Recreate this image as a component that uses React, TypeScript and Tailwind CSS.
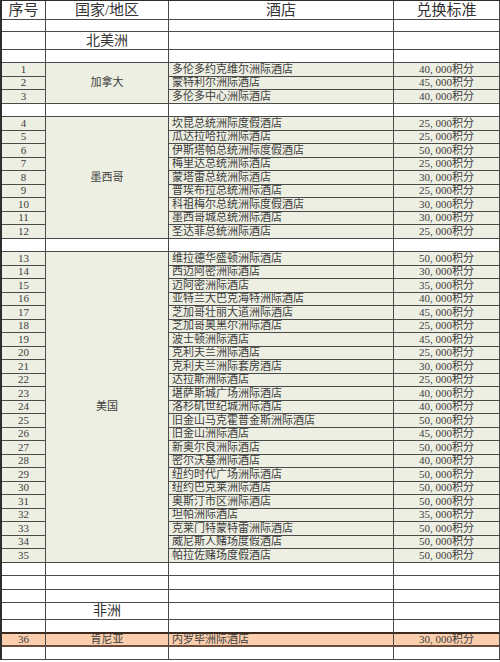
import React from "react";

interface HotelRow {
  n: number;
  hotel: string;
  pts: string;
}

interface Group {
  country: string;
  span: string;
  rows: HotelRow[];
}

const canada: Group = {
  country: "加拿大",
  span: "row-span-3",
  rows: [
    { n: 1, hotel: "多伦多约克维尔洲际酒店", pts: "40, 000积分" },
    { n: 2, hotel: "蒙特利尔洲际酒店", pts: "45, 000积分" },
    { n: 3, hotel: "多伦多中心洲际酒店", pts: "40, 000积分" },
  ],
};

const mexico: Group = {
  country: "墨西哥",
  span: "row-span-9",
  rows: [
    { n: 4, hotel: "坎昆总统洲际度假酒店", pts: "25, 000积分" },
    { n: 5, hotel: "瓜达拉哈拉洲际酒店", pts: "25, 000积分" },
    { n: 6, hotel: "伊斯塔帕总统洲际度假酒店", pts: "50, 000积分" },
    { n: 7, hotel: "梅里达总统洲际酒店", pts: "25, 000积分" },
    { n: 8, hotel: "蒙塔雷总统洲际酒店", pts: "30, 000积分" },
    { n: 9, hotel: "普埃布拉总统洲际酒店", pts: "25, 000积分" },
    { n: 10, hotel: "科祖梅尔总统洲际度假酒店", pts: "30, 000积分" },
    { n: 11, hotel: "墨西哥城总统洲际酒店", pts: "30, 000积分" },
    { n: 12, hotel: "圣达菲总统洲际酒店", pts: "25, 000积分" },
  ],
};

const usa: Group = {
  country: "美国",
  span: "row-span-23",
  rows: [
    { n: 13, hotel: "维拉德华盛顿洲际酒店", pts: "50, 000积分" },
    { n: 14, hotel: "西迈阿密洲际酒店", pts: "30, 000积分" },
    { n: 15, hotel: "迈阿密洲际酒店", pts: "35, 000积分" },
    { n: 16, hotel: "亚特兰大巴克海特洲际酒店", pts: "40, 000积分" },
    { n: 17, hotel: "芝加哥壮丽大道洲际酒店", pts: "45, 000积分" },
    { n: 18, hotel: "芝加哥奥黑尔洲际酒店", pts: "25, 000积分" },
    { n: 19, hotel: "波士顿洲际酒店", pts: "45, 000积分" },
    { n: 20, hotel: "克利夫兰洲际酒店", pts: "25, 000积分" },
    { n: 21, hotel: "克利夫兰洲际套房酒店", pts: "30, 000积分" },
    { n: 22, hotel: "达拉斯洲际酒店", pts: "25, 000积分" },
    { n: 23, hotel: "堪萨斯城广场洲际酒店", pts: "40, 000积分" },
    { n: 24, hotel: "洛杉矶世纪城洲际酒店", pts: "40, 000积分" },
    { n: 25, hotel: "旧金山马克霍普金斯洲际酒店", pts: "50, 000积分" },
    { n: 26, hotel: "旧金山洲际酒店", pts: "45, 000积分" },
    { n: 27, hotel: "新奥尔良洲际酒店", pts: "50, 000积分" },
    { n: 28, hotel: "密尔沃基洲际酒店", pts: "40, 000积分" },
    { n: 29, hotel: "纽约时代广场洲际酒店", pts: "50, 000积分" },
    { n: 30, hotel: "纽约巴克莱洲际酒店", pts: "50, 000积分" },
    { n: 31, hotel: "奥斯汀市区洲际酒店", pts: "50, 000积分" },
    { n: 32, hotel: "坦帕洲际酒店", pts: "35, 000积分" },
    { n: 33, hotel: "克莱门特蒙特雷洲际酒店", pts: "50, 000积分" },
    { n: 34, hotel: "威尼斯人赌场度假酒店", pts: "50, 000积分" },
    { n: 35, hotel: "帕拉佐赌场度假酒店", pts: "50, 000积分" },
  ],
};

const cell = "border-r border-b border-[#4a4a4a] flex items-center overflow-hidden whitespace-nowrap";

const EmptyRow = ({ h }: { h: string }) => (
  <>
    <div className={`${cell} ${h}`} />
    <div className={`${cell} ${h}`} />
    <div className={`${cell} ${h}`} />
    <div className={`${cell} ${h}`} />
  </>
);

const CountryGroup = ({ group }: { group: Group }) => (
  <>
    {group.rows.map((r, i) => (
      <React.Fragment key={r.n}>
        <div className={`${cell} h-[13.5px] justify-center bg-[#edefe3]`}>{r.n}</div>
        {i === 0 && (
          <div className={`${cell} ${group.span} justify-center bg-[#edefe3]`}>{group.country}</div>
        )}
        <div className={`${cell} h-[13.5px] pl-[3px] bg-[#edefe3]`}>{r.hotel}</div>
        <div className={`${cell} h-[13.5px] justify-center bg-[#edefe3]`}>{r.pts}</div>
      </React.Fragment>
    ))}
  </>
);

export default function App() {
  return (
    <div className="w-[500px] h-[662px] bg-white">
      <div className="grid grid-cols-[44px_123px_225px_106px] border-l-2 border-t border-[#2e2e2e] font-['Liberation_Serif','Noto_Sans_CJK_SC',serif] text-[11px] leading-none text-[#3d3d3d]">
        {/* header */}
        <div className={`${cell} h-[19px] justify-center text-[15px] text-[#333]`}>序号</div>
        <div className={`${cell} h-[19px] justify-center text-[15px] text-[#333]`}>国家/地区</div>
        <div className={`${cell} h-[19px] justify-center text-[15px] text-[#333]`}>酒店</div>
        <div className={`${cell} h-[19px] justify-center text-[15px] text-[#333]`}>兑换标准</div>

        <EmptyRow h="h-[12px]" />

        <div className={`${cell} h-[18px]`} />
        <div className={`${cell} h-[18px] justify-center text-[14px] text-[#333]`}>北美洲</div>
        <div className={`${cell} h-[18px]`} />
        <div className={`${cell} h-[18px]`} />

        <EmptyRow h="h-[13px]" />
        <CountryGroup group={canada} />
        <EmptyRow h="h-[13.5px]" />
        <CountryGroup group={mexico} />
        <EmptyRow h="h-[13.5px]" />
        <CountryGroup group={usa} />
        <EmptyRow h="h-[13.5px]" />
        <EmptyRow h="h-[13.5px]" />
        <EmptyRow h="h-[13.5px]" />

        <div className={`${cell} h-[17px]`} />
        <div className={`${cell} h-[17px] justify-center text-[14px] text-[#333]`}>非洲</div>
        <div className={`${cell} h-[17px]`} />
        <div className={`${cell} h-[17px]`} />

        <div className={`${cell} h-[13.5px] border-b-2 border-b-[#3a2a20]`} />
        <div className={`${cell} h-[13.5px] border-b-2 border-b-[#3a2a20]`} />
        <div className={`${cell} h-[13.5px] border-b-2 border-b-[#3a2a20]`} />
        <div className={`${cell} h-[13.5px] border-b-2 border-b-[#3a2a20]`} />

        {/* Africa */}
        <div className={`${cell} h-[13.5px] justify-center bg-[#fbcfae] border-b-2 border-b-[#6a4a38]`}>36</div>
        <div className={`${cell} h-[13.5px] justify-center bg-[#fbcfae] border-b-2 border-b-[#6a4a38]`}>肯尼亚</div>
        <div className={`${cell} h-[13.5px] pl-[3px] bg-[#fbcfae] border-b-2 border-b-[#6a4a38]`}>内罗毕洲际酒店</div>
        <div className={`${cell} h-[13.5px] justify-center bg-[#fbcfae] border-b-2 border-b-[#6a4a38]`}>30, 000积分</div>

        <EmptyRow h="h-[13px]" />
      </div>
    </div>
  );
}
